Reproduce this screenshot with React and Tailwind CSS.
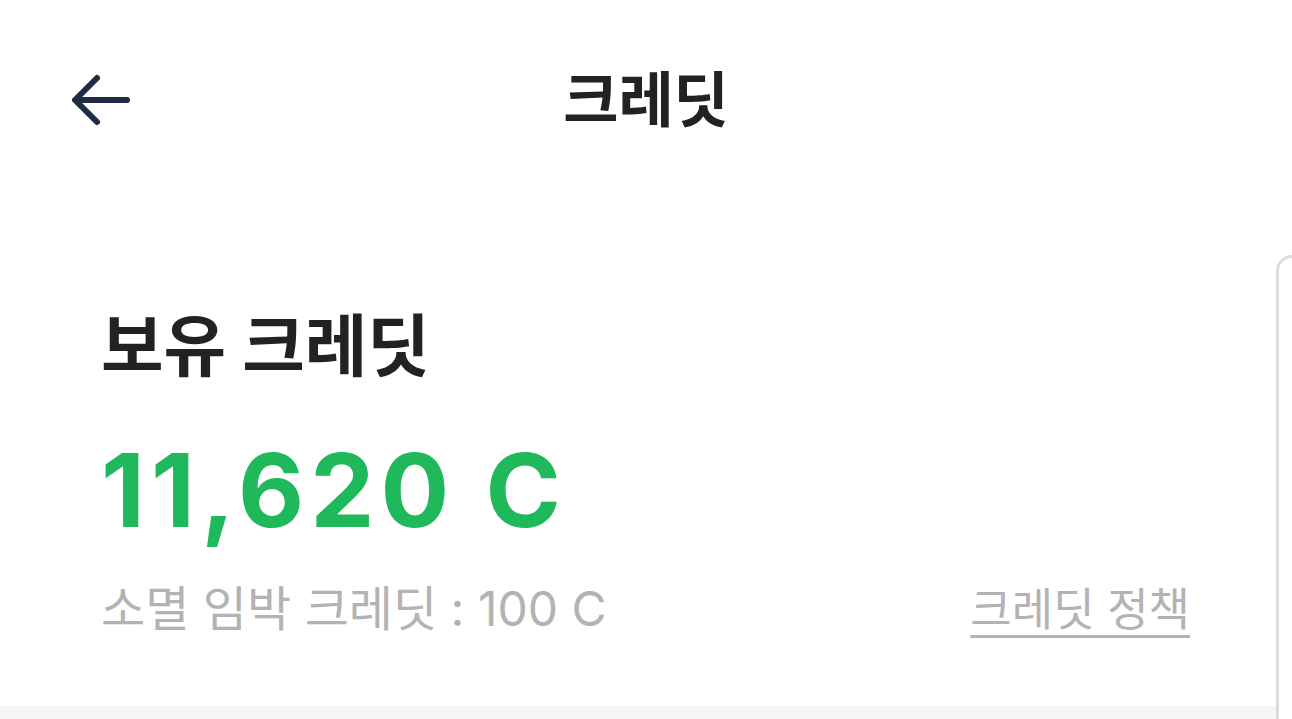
export default function App() {
  return (
    <div
      className="w-[1292px] h-[719px] bg-white overflow-hidden flex flex-col"
      style={{ fontFamily: 'Inter, "Noto Sans CJK KR", sans-serif' }}
    >
      {/* HEADER */}
      <div className="h-[200px] shrink-0 relative flex items-center justify-center">
        <button className="absolute left-[70px] top-[72px] w-[60px] h-[56px] flex items-center justify-center">
          <svg width="60" height="56" viewBox="0 0 60 56" fill="none">
            <path
              d="M57 28H6M27 6L5 28l22 22"
              stroke="#1f2a44"
              strokeWidth="6"
              strokeLinecap="round"
              strokeLinejoin="round"
            />
          </svg>
        </button>
        <h1 className="text-[60px] font-bold text-[#222] leading-none">크레딧</h1>
      </div>

      {/* BODY */}
      <div className="flex-1 flex min-h-0">
        <div className="flex-1 flex flex-col">
          <div className="flex-1 pl-[101px] pr-[86px] pt-[112px]">
            <h2 className="text-[68px] font-bold text-[#222] leading-none">보유 크레딧</h2>
            <div className="mt-[59px] text-[102px] font-bold text-[#1fb85a] leading-none tracking-[6px]">
              11,620 C
            </div>
            <div className="mt-[44px] flex items-center justify-between text-[48px] text-[#b3b3b3] leading-none">
              <span>소멸 임박 크레딧 : 100 C</span>
              <span className="text-[45px] underline underline-offset-[9px] decoration-[3px]">크레딧 정책</span>
            </div>
          </div>
          <div className="h-[13px] bg-[#f5f5f5] shrink-0" />
        </div>
        <div className="w-[16px] shrink-0 mt-[55px] border-l-[3px] border-t-[3px] border-[#dcdcdc] rounded-tl-[16px]" />
      </div>
    </div>
  );
}
